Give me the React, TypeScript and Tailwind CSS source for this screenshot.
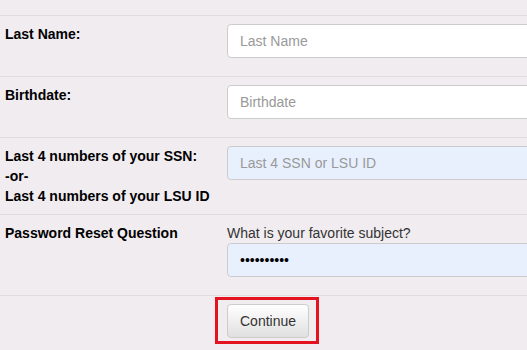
import React from "react";

const rows = [
  { label: ["Last Name:"], placeholder: "Last Name", filled: false },
  { label: ["Birthdate:"], placeholder: "Birthdate", filled: false },
  {
    label: ["Last 4 numbers of your SSN:", "-or-", "Last 4 numbers of your LSU ID"],
    placeholder: "Last 4 SSN or LSU ID",
    filled: true,
  },
];

export default function App() {
  return (
    <div className="w-[527px] h-[350px] overflow-hidden bg-[#f0ecf0] text-[14px] leading-[20px] font-['Liberation_Sans',Arial,sans-serif]">
      <div className="w-[560px]">
        {/* tail of the previous row */}
        <div className="h-[16px] border-b border-[#dddddd]" />

        {rows.map((row) => (
          <div
            key={row.placeholder}
            className="grid grid-cols-[227px_1fr] py-2 border-b border-[#dddddd]"
          >
            <div className="pl-[5px] font-bold text-black">
              {row.label.map((l) => (
                <div key={l}>{l}</div>
              ))}
            </div>
            <div>
              <input
                readOnly
                placeholder={row.placeholder}
                className={`block w-full h-[34px] mb-[10px] px-3 rounded-[4px] border border-[#cccccc] text-[14px] placeholder:text-[#999999] outline-none ${
                  row.filled ? "bg-[#e8f0fe]" : "bg-white"
                }`}
              />
            </div>
          </div>
        ))}

        <div className="grid grid-cols-[227px_1fr] py-2 border-b border-[#dddddd]">
          <div className="pl-[5px] font-bold text-black">Password Reset Question</div>
          <div>
            <div className="text-[#333333]">What is your favorite subject?</div>
            <input
              readOnly
              value="••••••••••"
              className="block w-full h-[34px] mb-[10px] px-3 rounded-[4px] border border-[#cccccc] bg-[#e8f0fe] text-[14px] text-black outline-none"
            />
          </div>
        </div>

        <div className="grid grid-cols-[227px_1fr] pt-2">
          <div />
          <div className="relative">
            <button className="h-[34px] px-3 rounded-[4px] border border-[#cccccc] bg-gradient-to-b from-white to-[#e0e0e0] text-[#333333] text-[14px]">
              Continue
            </button>
            {/* highlight box */}
            <div className="absolute -top-[7px] -left-[12px] w-[104px] h-[47px] border-[3px] border-[#e3141f]" />
          </div>
        </div>
      </div>
    </div>
  );
}
